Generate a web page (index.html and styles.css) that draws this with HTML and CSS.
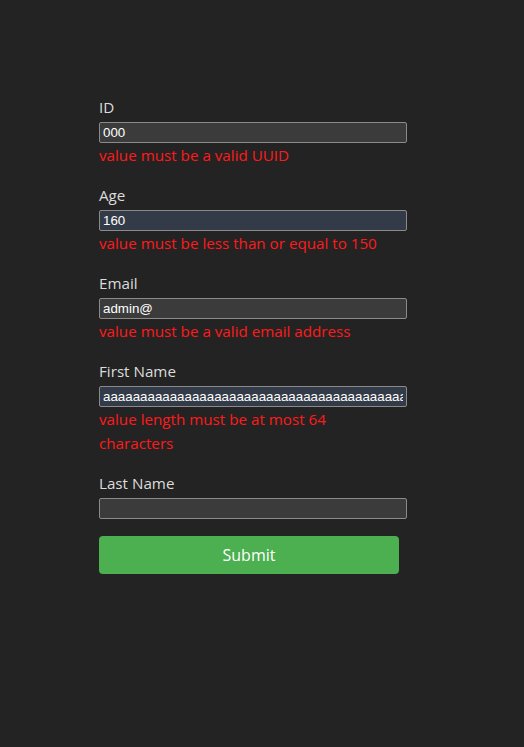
FILE: index.html
```html
<!DOCTYPE html>
<html>
<head>
<meta charset="utf-8">
<link rel="stylesheet" href="styles.css">
</head>
<body>
<form class="form">
  <div class="field">
    <label class="label">ID</label>
    <input class="input" type="text" value="000">
    <div class="error">value must be a valid UUID</div>
  </div>
  <div class="field">
    <label class="label">Age</label>
    <input class="input input-filled" type="text" value="160">
    <div class="error">value must be less than or equal to 150</div>
  </div>
  <div class="field">
    <label class="label">Email</label>
    <input class="input" type="text" value="admin@">
    <div class="error">value must be a valid email address</div>
  </div>
  <div class="field">
    <label class="label">First Name</label>
    <input class="input input-filled" type="text" value="aaaaaaaaaaaaaaaaaaaaaaaaaaaaaaaaaaaaaaaaaaaaaaaaaaaaaaaaaaaaaaaaaaaaa">
    <div class="error">value length must be at most 64 characters</div>
  </div>
  <div class="field">
    <label class="label">Last Name</label>
    <input class="input" type="text" value="">
  </div>
  <button class="submit" type="button">Submit</button>
</form>
</body>
</html>
```
FILE: styles.css
```css
html, body {
  margin: 0;
  padding: 0;
  background: #232323;
}
body {
  font-family: "Open Sans", "DejaVu Sans", sans-serif;
  font-size: 15.2px;
  line-height: 24px;
}
.form {
  width: 300px;
  padding: 95px 0 0 99px;
}
.field {
  display: flex;
  flex-direction: column;
  align-items: flex-start;
  margin-bottom: 16px;
}
.label {
  display: block;
  color: #dcdcdc;
  margin-bottom: 3px;
}
.input {
  box-sizing: border-box;
  width: 308px;
  height: 21px;
  margin: 0;
  padding: 1px 3px;
  font-family: "Liberation Sans", Arial, sans-serif;
  font-size: 13.33px;
  color: #ffffff;
  background: #3b3b3b;
  border: 1px solid #8a8a8a;
  border-radius: 2px;
  outline: none;
}
.input-filled {
  background: #343b48;
}
.error {
  color: #ff1a1a;
}
.submit {
  display: block;
  width: 300px;
  height: 38px;
  margin-top: 17px;
  border: none;
  border-radius: 4px;
  background: #4caf50;
  color: #ffffff;
  font-family: "Open Sans", "DejaVu Sans", sans-serif;
  font-size: 16px;
  font-weight: 500;
}
```
